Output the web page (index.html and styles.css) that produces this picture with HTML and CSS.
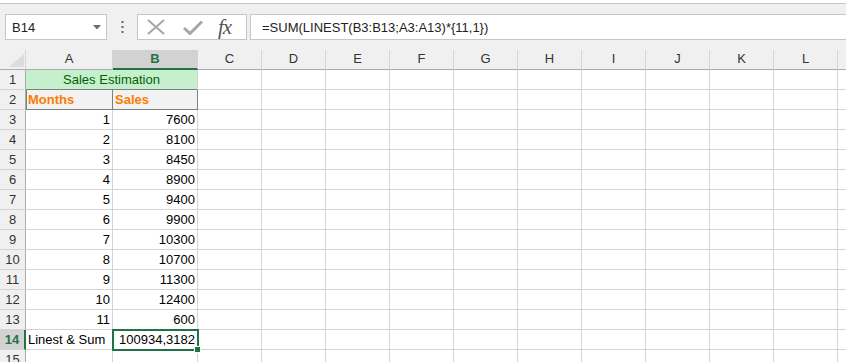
FILE: index.html
```html
<!DOCTYPE html>
<html lang="en">
<head>
    <meta charset="UTF-8">
    <meta name="viewport" content="width=device-width, initial-scale=1.0">
    <title>Sales Estimation</title>
    <link rel="stylesheet" href="styles.css">
</head>
<body>
    <div class="top-strip"></div>

    <div class="formula-bar">
        <div class="name-box">
            <span>B14</span>
            <svg width="8" height="5" viewBox="0 0 8 5"><path d="M0 0 H8 L4 4.5 Z" fill="#6b6b6b"/></svg>
        </div>
        <div class="grip">
            <svg width="3" height="13" viewBox="0 0 3 13">
                <rect x="0.5" y="0" width="2" height="2" fill="#666"/>
                <rect x="0.5" y="5" width="2" height="2" fill="#666"/>
                <rect x="0.5" y="10" width="2" height="2" fill="#666"/>
            </svg>
        </div>
        <div class="fx-box">
            <svg class="icon-cancel" width="18" height="16" viewBox="0 0 18 16">
                <path d="M1 1 L17 15 M17 1 L1 15" stroke="#a6a6a6" stroke-width="2" fill="none"/>
            </svg>
            <svg class="icon-enter" width="20" height="15" viewBox="0 0 20 15">
                <path d="M1 8 L7 13.5 L19 1.5" stroke="#a6a6a6" stroke-width="3" fill="none"/>
            </svg>
            <span class="fx">fx</span>
        </div>
        <div class="formula-input">=SUM(LINEST(B3:B13;A3:A13)*{11,1})</div>
    </div>

    <div class="sheet-wrap">
        <div class="sheet" id="sheet"></div>
    </div>

    <script>
        // Cell contents, keyed by row number
        const sales = [7600, 8100, 8450, 8900, 9400, 9900, 10300, 10700, 11300, 12400, 600];
        const cols = 'ABCDEFGHIJKLM'.split('');
        const sheet = document.getElementById('sheet');

        function cell(text, cls, span) {
            const div = document.createElement('div');
            div.className = 'cell ' + (cls || '');
            if (text !== undefined) div.textContent = text;
            if (span) div.style.gridColumn = 'span ' + span;
            sheet.appendChild(div);
            return div;
        }

        // Header row
        const corner = cell(undefined, 'corner');
        corner.innerHTML = '<svg width="15" height="13" viewBox="0 0 15 13"><path d="M15 0 V13 H0 Z" fill="#dcdcdc"/></svg>';
        cols.forEach(c => cell(c, 'col-head' + (c === 'B' ? ' active' : '')));

        for (let r = 1; r <= 15; r++) {
            cell(r, 'row-head' + (r === 14 ? ' active' : ''));
            let used = 0;
            if (r === 1) {
                cell('Sales Estimation', 'title', 2);
                used = 2;
            } else if (r === 2) {
                cell('Months', 'calc first');
                cell('Sales', 'calc');
                used = 2;
            } else if (r >= 3 && r <= 13) {
                cell(r - 2, 'num');
                cell(sales[r - 3], 'num');
                used = 2;
            } else if (r === 14) {
                cell('Linest & Sum', '');
                const sel = cell('100934,3182', 'num selected');
                sel.innerHTML = '100934,3182<span class="fill-handle"></span>';
                used = 2;
            }
            for (let i = used; i < cols.length; i++) cell('', '');
        }
    </script>
</body>
</html>
```

FILE: styles.css
```css
body {
    margin: 0;
    font-family: "Liberation Sans", Arial, sans-serif;
    font-size: 13px;
    color: #000;
    background: #fff;
    overflow: hidden;
}

.top-strip {
    height: 3px;
    background: #fff;
    border-bottom: 1px solid #c6c6c6;
}

.formula-bar {
    display: flex;
    height: 26px;
    padding: 10px 0 10px 5px;
    background: #f0f0f0;
}

.name-box {
    width: 102px;
    box-sizing: border-box;
    border: 1px solid #c6c6c6;
    background: #fff;
    display: flex;
    align-items: center;
    justify-content: space-between;
    padding: 0 5px 0 6px;
    color: #222;
}

.grip {
    width: 30px;
    display: flex;
    align-items: center;
    justify-content: center;
}

.fx-box {
    width: 110px;
    box-sizing: border-box;
    border: 1px solid #c6c6c6;
    background: #fff;
    display: flex;
    align-items: center;
}

.icon-cancel {
    margin-left: 9px;
}

.icon-enter {
    margin-left: 18px;
    margin-top: 1px;
}

.fx {
    margin-left: 15px;
    font-family: "Liberation Serif", "Times New Roman", serif;
    font-style: italic;
    font-size: 21px;
    color: #555;
    letter-spacing: -1px;
    line-height: 1;
}

.formula-input {
    flex: 1;
    margin-left: 3px;
    box-sizing: border-box;
    border: 1px solid #c6c6c6;
    border-right: none;
    background: #fff;
    padding-left: 11px;
    display: flex;
    align-items: center;
    color: #222;
    white-space: nowrap;
}

/* grid */
.sheet-wrap {
    height: 312px;
    overflow: hidden;
}

.sheet {
    display: grid;
    grid-template-columns: 26px 87px 85px repeat(11, 64px);
    grid-auto-rows: 20px;
    width: max-content;
}

.cell {
    box-sizing: border-box;
    border-right: 1px solid #d4d4d4;
    border-bottom: 1px solid #d4d4d4;
    padding: 0 2px;
    line-height: 20px;
    white-space: nowrap;
    position: relative;
}

.corner {
    background: #f0f0f0;
    border-right-color: #d4d4d4;
    border-bottom-color: #ababab;
    display: flex;
    align-items: flex-end;
    justify-content: flex-end;
    padding: 0 1px 2px 0;
}

.corner svg {
    display: block;
}

.col-head {
    background: #f0f0f0;
    border-bottom-color: #ababab;
    text-align: center;
    line-height: 18px;
    color: #333;
}

.row-head {
    background: #f0f0f0;
    border-right-color: #ababab;
    text-align: center;
    padding: 0;
    color: #333;
}

.col-head.active {
    background: #d2d2d2;
    border-bottom: 2px solid #217346;
    color: #217346;
    font-weight: bold;
}

.row-head.active {
    background: #d2d2d2;
    border-right: 2px solid #217346;
    color: #217346;
    font-weight: bold;
}

.num {
    text-align: right;
}

.title {
    background: #c6efce;
    color: #006100;
    text-align: center;
    border-bottom-color: #7f7f7f;
}

.calc {
    background: #f2f2f2;
    color: #fa7d00;
    font-weight: bold;
    border-right-color: #7f7f7f;
    border-bottom-color: #7f7f7f;
}

.calc.first {
    box-shadow: inset 1px 0 #7f7f7f;
}

.selected {
    outline: 2px solid #217346;
    outline-offset: -1px;
    z-index: 1;
}

.fill-handle {
    position: absolute;
    right: -4px;
    bottom: -4px;
    width: 5px;
    height: 5px;
    background: #217346;
    border: 1px solid #fff;
}
```
